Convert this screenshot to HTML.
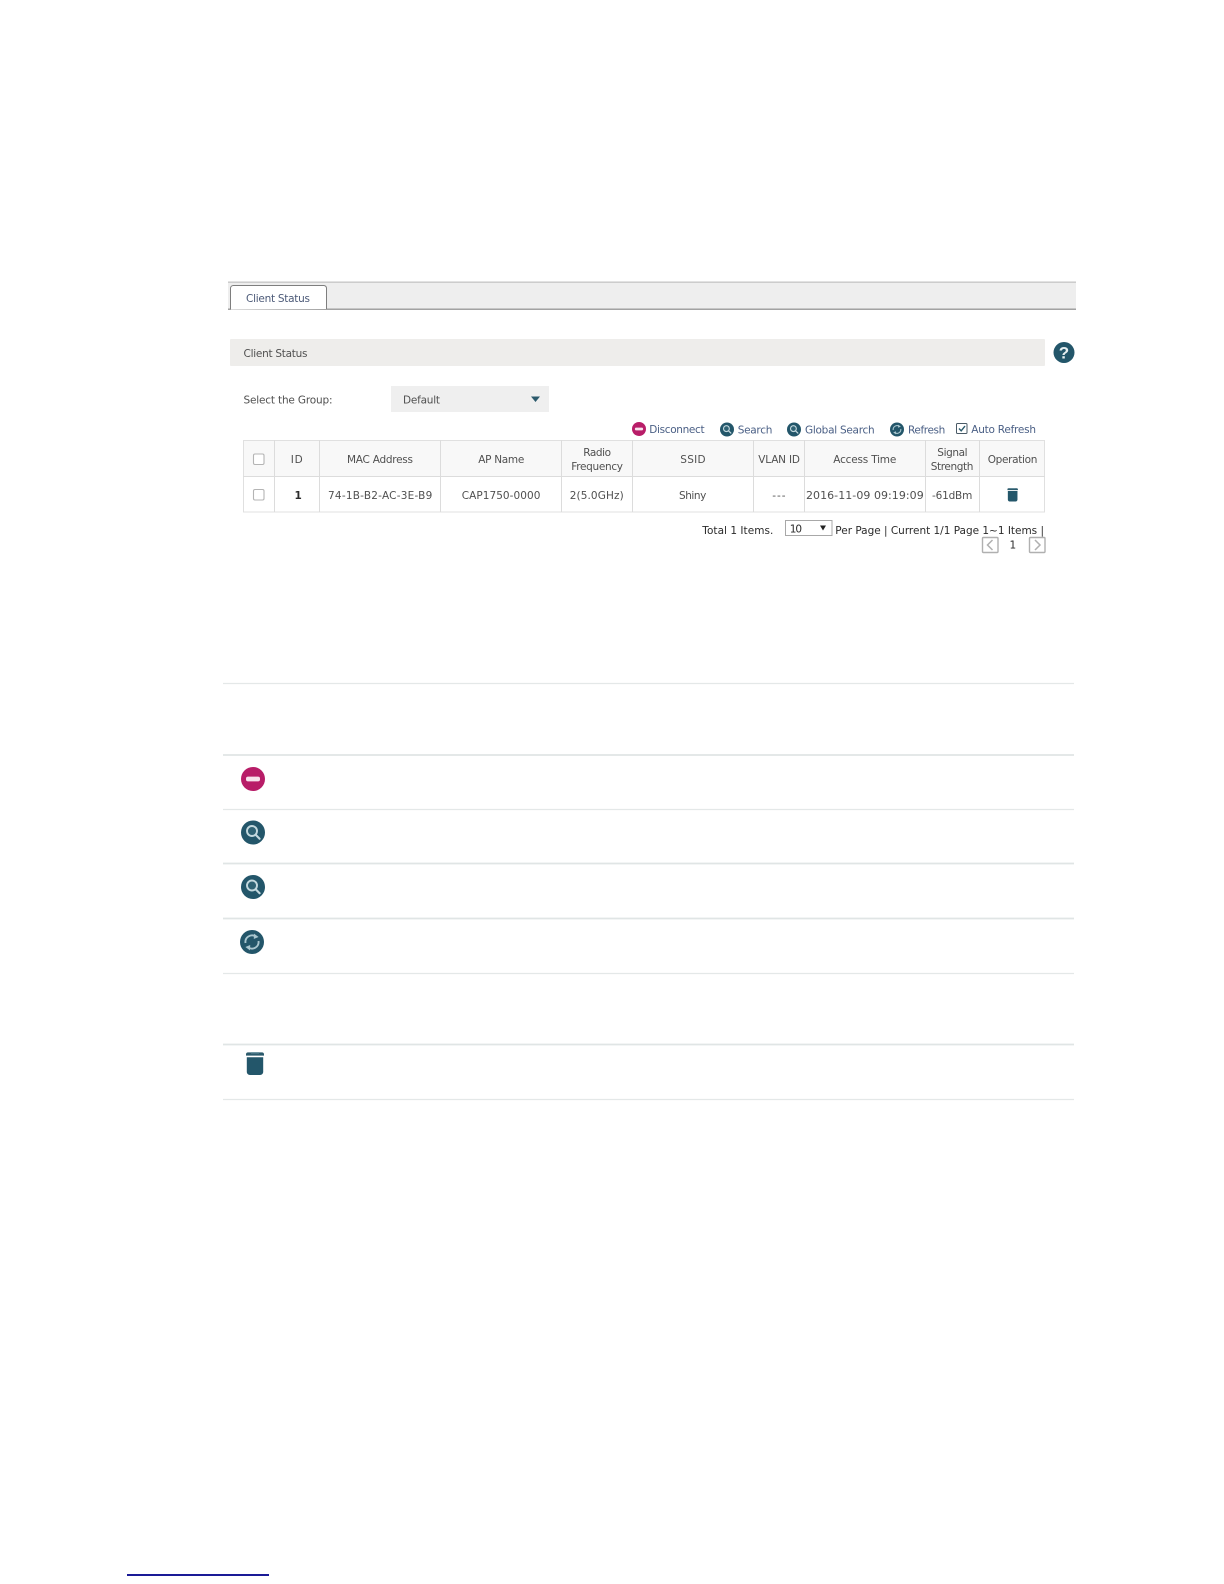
<!DOCTYPE html>
<html><head><meta charset="utf-8"><title>Client Status</title>
<style>
html,body{margin:0;padding:0;background:#fff}
svg{display:block}
text{font-family:"DejaVu Sans","Liberation Sans",sans-serif;font-size:10.5px;fill:#505050}
.b{fill:#4a5f85}
.k{fill:#2b2b2b}
.t{fill:#4c5a78}
.l{stroke:#e4e8e8;stroke-width:1.2}
.m{stroke:#e0e5e5;stroke-width:1.8}
.g{stroke:#dcdcdc;stroke-width:1}
</style></head><body>
<svg width="1224" height="1584" viewBox="0 0 1224 1584" xmlns="http://www.w3.org/2000/svg">
<defs>
<symbol id="dis" viewBox="0 0 24 24"><circle cx="12" cy="12" r="12" fill="#b81d68"/><rect x="5" y="9.6" width="14" height="4.8" rx="2" fill="#f7e3ec"/></symbol>
<symbol id="sea" viewBox="0 0 24 24"><circle cx="12" cy="12" r="12" fill="#23566a"/><circle cx="11" cy="10.5" r="5" fill="#2f6274" stroke="#c3d8de" stroke-width="1.9"/><path d="M14.8 14.4L18.6 18.2" stroke="#c3d8de" stroke-width="2.1" stroke-linecap="round"/></symbol>
<symbol id="ref" viewBox="0 0 24 24"><circle cx="12" cy="12" r="12" fill="#23566a"/><path d="M5.5 13A6.6 6.6 0 0 1 15.5 6.4" fill="none" stroke="#a9c6cf" stroke-width="1.9"/><path d="M18.5 11A6.6 6.6 0 0 1 8.5 17.6" fill="none" stroke="#a9c6cf" stroke-width="1.9"/><path d="M14 3.6L18.6 7 13.8 9Z" fill="#a9c6cf"/><path d="M10 20.4L5.4 17 10.2 15Z" fill="#a9c6cf"/></symbol>
<symbol id="tr" viewBox="0 0 18 23"><path d="M0 2.2A2 2 0 0 1 2 .4H16A2 2 0 0 1 18 2.2V3.6H0Z" fill="#2b5a6c"/><rect x="5" y="0" width="8" height="1.4" fill="#6f95a2"/><path d="M.8 5.2H17.2V19.5A3.2 3.2 0 0 1 14 23H4A3.2 3.2 0 0 1 .8 19.5Z" fill="#23566a"/></symbol>
</defs>

<!-- tab strip -->
<rect x="228" y="282" width="848" height="27" fill="#eeeeee"/>
<rect x="228" y="281.5" width="848" height="1.3" fill="#c4c4c4"/>
<rect x="228" y="308.6" width="848" height="1.2" fill="#8c8c8c"/>
<path d="M230.5 309.5V288A3 3 0 0 1 233.5 285.5H324A3 3 0 0 1 326.5 288V309" fill="#fff" stroke="#7e7e7e" stroke-width="1"/>
<text class="t" x="246" y="302" textLength="64">Client Status</text>

<!-- section bar -->
<rect x="230" y="339" width="815" height="27" rx="1" fill="#eeedeb"/>
<text x="243.5" y="357" textLength="64">Client Status</text>
<circle cx="1064" cy="352.5" r="10.5" fill="#23566a"/>
<text x="1064" y="358.5" text-anchor="middle" style="font-family:'Liberation Sans',sans-serif;font-size:17px;font-weight:bold;fill:#e8f0f2">?</text>

<!-- group select -->
<text x="243.5" y="403.5" textLength="89">Select the Group:</text>
<rect x="391" y="386" width="158" height="26" fill="#efefef"/>
<text x="403" y="403.5" textLength="37">Default</text>
<path d="M531 396.5H540L535.5 402Z" fill="#2b5a6c"/>

<!-- toolbar -->
<use href="#dis" x="632" y="422" width="14" height="14"/>
<text class="b" x="649.3" y="433" textLength="55.3">Disconnect</text>
<use href="#sea" x="720" y="422.5" width="14" height="14"/>
<text class="b" x="737.7" y="433.5" textLength="34.7">Search</text>
<use href="#sea" x="787" y="422.5" width="14" height="14"/>
<text class="b" x="805" y="433.5" textLength="69.7">Global Search</text>
<use href="#ref" x="890" y="422.5" width="14" height="14"/>
<text class="b" x="908" y="433.5" textLength="37.3">Refresh</text>
<rect x="956.5" y="423.5" width="10.5" height="10" rx="1" fill="#fff" stroke="#4a5a66" stroke-width="1"/>
<path d="M959 428.5L961.2 430.8L965 426.1" fill="none" stroke="#2b5a6c" stroke-width="1.4"/>
<text class="b" x="971.3" y="433" textLength="64.7">Auto Refresh</text>

<!-- table -->
<rect x="243.5" y="440.5" width="801" height="36" fill="#f8f8f8"/>
<rect x="243.5" y="440.5" width="801" height="71.5" fill="none" stroke="#e0e0e0"/>
<path class="g" d="M243 476.5H1045M274.5 440V512M319.5 440V512M440.5 440V512M561.5 440V512M632.5 440V512M753.5 440V512M804.5 440V512M925.5 440V512M979.5 440V512" fill="none"/>
<rect x="253.5" y="454" width="10.5" height="10.5" rx="1.5" fill="#fff" stroke="#b4b4b4" stroke-width="1.1"/>
<rect x="253.5" y="489.5" width="10.5" height="10.5" rx="1.5" fill="#fff" stroke="#b4b4b4" stroke-width="1.1"/>

<text x="290.7" y="463" textLength="12">ID</text>
<text x="347" y="463" textLength="66">MAC Address</text>
<text x="478.3" y="463" textLength="46">AP Name</text>
<text x="583.3" y="456" textLength="27.7">Radio</text>
<text x="571.3" y="470" textLength="51.7">Frequency</text>
<text x="680.3" y="463" textLength="25.3">SSID</text>
<text x="758.3" y="463" textLength="41.7">VLAN ID</text>
<text x="833.3" y="463" textLength="63">Access Time</text>
<text x="937.3" y="456" textLength="30.3">Signal</text>
<text x="930.7" y="470" textLength="42.7">Strength</text>
<text x="987.7" y="463" textLength="49.7">Operation</text>

<text class="k" x="294.5" y="499" style="font-weight:bold" textLength="5">1</text>
<text x="328" y="499" textLength="104.3">74-1B-B2-AC-3E-B9</text>
<text x="461.7" y="499" textLength="78.7">CAP1750-0000</text>
<text x="569.7" y="499" textLength="54">2(5.0GHz)</text>
<text x="679" y="499" textLength="27.3">Shiny</text>
<text x="772.3" y="499" textLength="13.3">---</text>
<text x="806" y="499" textLength="117.7" style="font-size:11px">2016-11-09 09:19:09</text>
<text x="932" y="499" textLength="40.3">-61dBm</text>
<use href="#tr" x="1007.3" y="488" width="10.7" height="13.5"/>

<!-- pagination -->
<text class="k" x="702.3" y="534" textLength="71">Total 1 Items.</text>
<rect x="785.5" y="520.5" width="46.5" height="15" fill="#fff" stroke="#a8a8a8"/>
<text class="k" x="789.7" y="532.5" textLength="12.3">10</text>
<path d="M820 525.5H826L823 530.5Z" fill="#222"/>
<text class="k" x="835.3" y="534" textLength="208.7">Per Page | Current 1/1 Page 1~1 Items |</text>
<rect x="982.5" y="537.5" width="15.5" height="15" rx="1" fill="#fff" stroke="#b0b0b0" stroke-width="1.4"/>
<path d="M992.5 540L987.5 545L992.5 550" fill="none" stroke="#b0b0b0" stroke-width="1.5"/>
<text class="k" x="1009.5" y="548.5" textLength="5.5">1</text>
<rect x="1029.5" y="537.5" width="15.5" height="15" rx="1" fill="#fff" stroke="#b0b0b0" stroke-width="1.4"/>
<path d="M1035 540L1040 545L1035 550" fill="none" stroke="#b0b0b0" stroke-width="1.5"/>

<!-- doc table lines -->
<path class="l" d="M223 683.5H1074M223 809.5H1074M223 973.5H1074M223 1099.5H1074" fill="none"/>
<path class="m" d="M223 755H1074M223 863.5H1074M223 918.5H1074M223 1044.5H1074" fill="none"/>
<use href="#dis" x="241" y="767" width="24" height="24"/>
<use href="#sea" x="241" y="820.5" width="24" height="24"/>
<use href="#sea" x="241" y="875" width="24" height="24"/>
<use href="#ref" x="240" y="930" width="24" height="24"/>
<use href="#tr" x="246" y="1052" width="18" height="23"/>

<!-- footnote rule -->
<rect x="127" y="1574" width="142" height="2" fill="#1a1a96"/>
</svg>
</body></html>
